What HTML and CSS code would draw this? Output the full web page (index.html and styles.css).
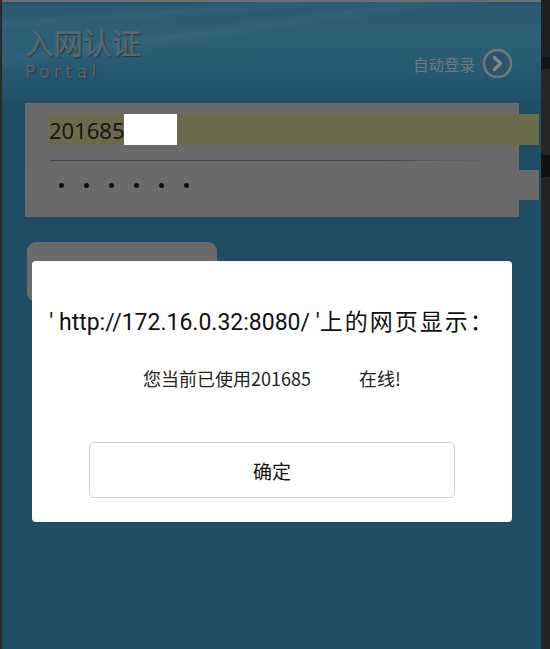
FILE: index.html
```html
<!DOCTYPE html>
<html>
<head>
  <meta charset="UTF-8">
  <title>入网认证</title>
  <link rel="stylesheet" href="styles.css">
</head>
<body>
  <div class="screen">
    <div class="edge-left"></div>

    <div class="panel">
      <div class="top-line"></div>
      <div class="header">
        <div class="brand">
          <div class="brand-title">入网认证</div>
          <div class="brand-sub">Portal</div>
        </div>
        <div class="auto-login">
          <span>自动登录</span>
          <span class="go-icon">
            <svg width="31" height="31" viewBox="0 0 31 31">
              <circle cx="15.5" cy="15.5" r="13.5" fill="#2f5368" stroke="#6c7a7c" stroke-width="2.5"/>
              <path d="M12.5 9.5 L18.5 15.5 L12.5 21.5" fill="none" stroke="#7d8c8e" stroke-width="3.2" stroke-linecap="round" stroke-linejoin="round"/>
            </svg>
          </span>
        </div>
      </div>

      <div class="form-box">
        <div class="row row-user">
          <span class="user-text">201685</span><span class="mask"></span>
        </div>
        <div class="divider"></div>
        <div class="row row-pass">
          <span class="dot"></span><span class="dot"></span><span class="dot"></span>
          <span class="dot"></span><span class="dot"></span><span class="dot"></span>
        </div>
      </div>

      <div class="login-btn"></div>

      <div class="dialog">
        <div class="dialog-title">' http://172.16.0.32:8080/ '<span class="cjk">上的网页显示：</span></div>
        <div class="dialog-msg">您当前已使用201685<span class="blank"></span>在线!</div>
        <div class="dialog-actions">
          <button class="ok-btn">确定</button>
        </div>
      </div>
    </div>

    <div class="edge-right">
      <div class="band b1"></div>
      <div class="band b2"></div>
      <div class="band b3"></div>
      <div class="band b4"></div>
    </div>
  </div>
</body>
</html>
```

FILE: styles.css
```css
body {
  margin: 0;
  background: #222;
  font-family: "Noto Sans CJK SC", "Noto Sans", sans-serif;
}

.screen {
  display: flex;
  width: 550px;
  height: 649px;
  overflow: hidden;
}

.edge-left {
  width: 2px;
  background: #2a2a2a;
}

.panel {
  position: relative;
  width: 539px;
  background: #1f4d66;
}

.top-line {
  height: 2px;
  background: #6b7071;
}

.header {
  height: 98px;
  display: flex;
  justify-content: space-between;
  background:
    linear-gradient(172deg, transparent 30%, rgba(140, 170, 180, 0.08) 34%, transparent 40%),
    linear-gradient(176deg, transparent 12%, rgba(140, 170, 180, 0.07) 16%, transparent 22%),
    linear-gradient(180deg, #2a5870 0%, #2e6076 35%, #285b73 65%, #1f5069 100%);
}

.brand {
  padding: 21px 0 0 23px;
}

.brand-title {
  font-size: 29px;
  line-height: 38px;
  color: #58686e;
  text-shadow: 1px 1px 1px #263a44, -1px -1px 0 rgba(180, 200, 205, 0.15);
}

.brand-sub {
  font-family: "DejaVu Sans", sans-serif;
  font-size: 17px;
  line-height: 22px;
  letter-spacing: 4.5px;
  color: #56666c;
  text-shadow: 1px 1px 1px #263a44;
}

.auto-login {
  display: flex;
  align-items: center;
  gap: 7px;
  padding: 46px 28px 0 0;
  align-self: flex-start;
  font-size: 15.5px;
  color: #6e797b;
}

.go-icon svg {
  display: block;
}

.form-box {
  margin: 3px 0 0 23px;
  width: 494px;
  height: 114px;
  padding-top: 11px;
  box-sizing: border-box;
  background: #6a6a6a;
}

.row {
  display: flex;
  align-items: center;
}

.row-user {
  margin-left: 24px;
  width: 490px;
  height: 31px;
  background: #6b6b4b;
}

.user-text {
  font-family: "Open Sans", sans-serif;
  font-size: 22px;
  color: #111;
}

.mask {
  width: 53px;
  height: 31px;
  background: #fff;
}

.divider {
  margin: 15px 0 0 25px;
  width: 450px;
  height: 1px;
  background: linear-gradient(90deg, #3e4a4e 70%, rgba(62, 74, 78, 0));
}

.row-pass {
  margin-top: 9px;
  width: 514px;
  height: 30px;
  padding-left: 34px;
  box-sizing: border-box;
  gap: 20px;
  background: #6b6b6b;
}

.dot {
  width: 5px;
  height: 5px;
  border-radius: 50%;
  background: #111;
}

.login-btn {
  margin: 25px 0 0 25px;
  width: 190px;
  height: 60px;
  border-radius: 9px;
  background: #6b6b6b;
}

.dialog {
  position: absolute;
  left: 30px;
  top: 261px;
  width: 480px;
  height: 261px;
  background: #fff;
  border-radius: 4px;
  box-sizing: border-box;
  padding-top: 44px;
  text-align: center;
}

.dialog-title {
  font-family: "Roboto", "Noto Sans CJK SC", sans-serif;
  font-size: 23px;
  line-height: 30px;
  color: #111;
}

.dialog-title .cjk {
  font-family: "Noto Sans CJK SC", sans-serif;
  letter-spacing: 2px;
}

.dialog-msg {
  margin-top: 27px;
  font-size: 18px;
  line-height: 26px;
  color: #222;
}

.blank {
  display: inline-block;
  width: 48px;
}

.dialog-actions {
  margin-top: 51px;
  display: flex;
  justify-content: center;
}

.ok-btn {
  width: 366px;
  height: 56px;
  background: #fff;
  border: 1px solid #cfcfcf;
  border-radius: 5px;
  font-family: "Noto Sans CJK SC", sans-serif;
  font-size: 19px;
  color: #111;
}

.edge-right {
  width: 9px;
  display: flex;
  flex-direction: column;
  background: #252525;
}

.band { width: 100%; }
.b1 { height: 57px; background: #1f2022; }
.b2 { height: 12px; background: #111419; }
.b3 { height: 86px; background: #262626; }
.b4 { height: 22px; background: #111; }
```
